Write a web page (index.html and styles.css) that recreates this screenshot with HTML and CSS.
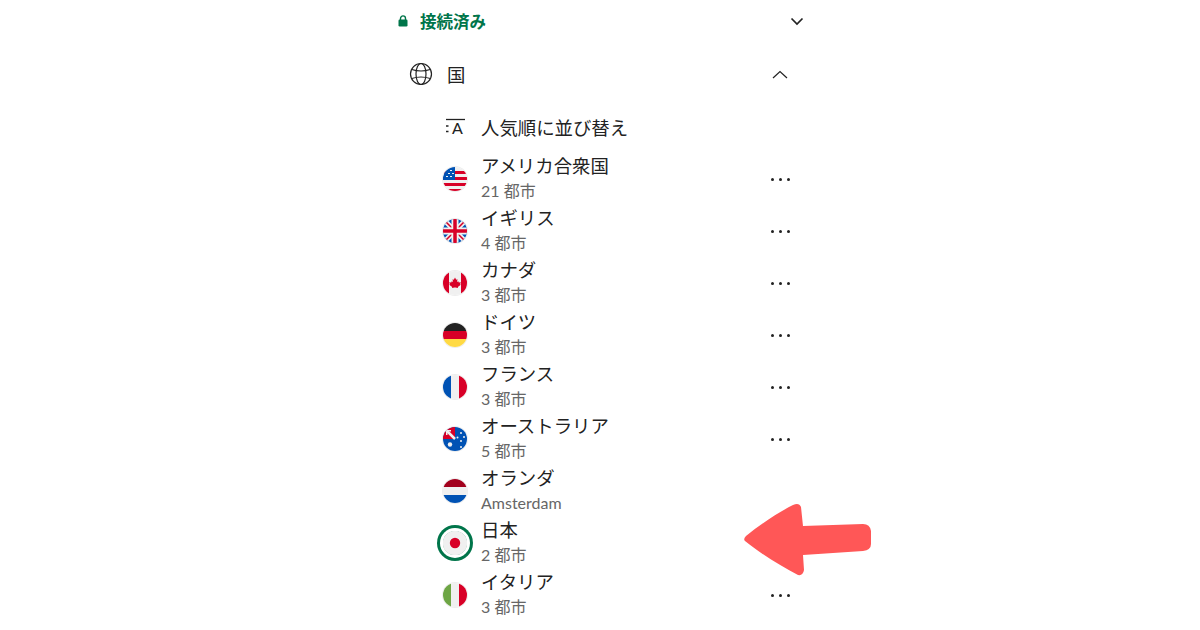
FILE: index.html
```html
<!DOCTYPE html>
<html lang="ja">
<head>
<meta charset="utf-8">
<title>接続済み</title>
<link rel="stylesheet" href="styles.css">
</head>
<body>
<svg class="defs" width="0" height="0">
  <defs>
    <clipPath id="c"><circle cx="12" cy="12" r="12"/></clipPath>
  </defs>
</svg>
<main class="panel">
  <div class="connected">
    <svg class="lock" viewBox="0 0 10 12" width="10" height="12"><path d="M2.5 5V3.4a2.5 2.5 0 0 1 5 0V5" fill="none" stroke="#00754a" stroke-width="1.4"/><rect x="0.5" y="4.6" width="9" height="6.9" rx="1.2" fill="#00754a"/></svg>
    <span class="connected-text">接続済み</span>
    <svg class="chev-down" viewBox="0 0 14 9" width="14" height="9"><path d="M1.5 1.5 7 7l5.500-5.500" fill="none" stroke="#222" stroke-width="1.700"/></svg>
  </div>
  <div class="section">
    <svg class="globe" viewBox="0 0 24 24" width="24" height="24" fill="none" stroke="#222" stroke-width="1.200"><circle cx="12" cy="12" r="10.500"/><ellipse cx="12" cy="12" rx="5" ry="10.500"/><path d="M2.800 7.500Q12 10.500 21.200 7.500M2.800 16.500Q12 13.500 21.200 16.500"/></svg>
    <span class="section-text">国</span>
    <svg class="chev-up" viewBox="0 0 16 9" width="16" height="9"><path d="M1 8 8 1.500 15 8" fill="none" stroke="#222" stroke-width="1.200"/></svg>
  </div>
  <div class="sort">
    <svg class="sort-icon" viewBox="0 0 20 18" width="20" height="18"><path d="M1 1.500h19" stroke="#222" stroke-width="1.300"/><path d="M1 8h2.500M1 13.500h2.500" stroke="#222" stroke-width="1.500"/></svg>
    <span class="sort-a">A</span>
    <span class="sort-text">人気順に並び替え</span>
  </div>
  <ul class="list">
    <li class="row">
      <span class="flag-wrap"><svg class="flag" viewBox="0 0 24 24"><g clip-path="url(#c)"><rect width="24" height="24" fill="#f0f0f0"/><path d="M0 4h24v3H0zM0 10h24v3H0zM0 16h24v3H0zM3 22h18v2H3z" fill="#d80027"/><path d="M0 0h12v13H0z" fill="#0052b4"/><path d="M3 9h2v1H3zM7 9h2v1H7zM5 6h2v1H5zM9 6h2v1H9zM7 3h2v1H7z" fill="#f0f0f0"/></g></svg></span>
      <div class="info"><div class="name">アメリカ合衆国</div><div class="sub">21 都市</div></div>
      <span class="more"><i></i><i></i><i></i></span>
    </li>
    <li class="row">
      <span class="flag-wrap"><svg class="flag" viewBox="0 0 24 24"><g clip-path="url(#c)"><rect width="24" height="24" fill="#0052b4"/><path d="M0 0 24 24M24 0 0 24" stroke="#f0f0f0" stroke-width="5"/><path d="M0 0 24 24M24 0 0 24" stroke="#d80027" stroke-width="1.500"/><path d="M12 0v24M0 12h24" stroke="#f0f0f0" stroke-width="7"/><path d="M12 0v24M0 12h24" stroke="#d80027" stroke-width="3.500"/></g></svg></span>
      <div class="info"><div class="name">イギリス</div><div class="sub">4 都市</div></div>
      <span class="more"><i></i><i></i><i></i></span>
    </li>
    <li class="row">
      <span class="flag-wrap"><svg class="flag" viewBox="0 0 24 24"><g clip-path="url(#c)"><rect width="24" height="24" fill="#f0f0f0"/><path d="M0 0h6v24H0zM18 0h6v24h-6z" fill="#d80027"/><path d="M12 6.500l1.200 2.300 1.300-.6-.5 2.800 1.300-.8.500 1.300 2-.3-.7 2 .7.500-3 2.200.3 1-2.700-.4h-.8l-2.700.4.300-1-3-2.200.7-.5-.7-2 2 .3.500-1.300 1.300.8-.5-2.800 1.300.6z" fill="#d80027"/></g></svg></span>
      <div class="info"><div class="name">カナダ</div><div class="sub">3 都市</div></div>
      <span class="more"><i></i><i></i><i></i></span>
    </li>
    <li class="row">
      <span class="flag-wrap"><svg class="flag" viewBox="0 0 24 24"><g clip-path="url(#c)"><rect width="24" height="8" fill="#222"/><rect y="8" width="24" height="8" fill="#d80027"/><rect y="16" width="24" height="8" fill="#ffda44"/></g></svg></span>
      <div class="info"><div class="name">ドイツ</div><div class="sub">3 都市</div></div>
      <span class="more"><i></i><i></i><i></i></span>
    </li>
    <li class="row">
      <span class="flag-wrap"><svg class="flag" viewBox="0 0 24 24"><g clip-path="url(#c)"><rect width="8" height="24" fill="#0052b4"/><rect x="8" width="8" height="24" fill="#f0f0f0"/><rect x="16" width="8" height="24" fill="#d80027"/></g></svg></span>
      <div class="info"><div class="name">フランス</div><div class="sub">3 都市</div></div>
      <span class="more"><i></i><i></i><i></i></span>
    </li>
    <li class="row">
      <span class="flag-wrap"><svg class="flag" viewBox="0 0 24 24"><g clip-path="url(#c)"><rect width="24" height="24" fill="#0052b4"/><path d="M0 0h12v12H0z" fill="#d80027"/><path d="M3 3 12 12" stroke="#f0f0f0" stroke-width="2.500"/><path d="M3 3h5v1.500H4.500V8H3z" fill="#f0f0f0"/><circle cx="7" cy="17.500" r="2.200" fill="#f0f0f0"/><g fill="#f0f0f0"><circle cx="18" cy="6" r="1"/><circle cx="14.500" cy="10.500" r="1"/><circle cx="21" cy="10" r="1"/><circle cx="18" cy="14" r="1"/><circle cx="18" cy="20" r="1"/></g></g></svg></span>
      <div class="info"><div class="name">オーストラリア</div><div class="sub">5 都市</div></div>
      <span class="more"><i></i><i></i><i></i></span>
    </li>
    <li class="row">
      <span class="flag-wrap"><svg class="flag" viewBox="0 0 24 24"><g clip-path="url(#c)"><rect width="24" height="8" fill="#a2001d"/><rect y="8" width="24" height="8" fill="#f0f0f0"/><rect y="16" width="24" height="8" fill="#0052b4"/></g></svg></span>
      <div class="info"><div class="name">オランダ</div><div class="sub">Amsterdam</div></div>
    </li>
    <li class="row">
      <span class="flag-wrap selected"><svg class="flag" viewBox="0 0 24 24"><g clip-path="url(#c)"><rect width="24" height="24" fill="#f0f0f0"/><circle cx="12" cy="12" r="5.200" fill="#d80027"/></g></svg></span>
      <div class="info"><div class="name">日本</div><div class="sub">2 都市</div></div>
    </li>
    <li class="row">
      <span class="flag-wrap"><svg class="flag" viewBox="0 0 24 24"><g clip-path="url(#c)"><rect width="8" height="24" fill="#6da544"/><rect x="8" width="8" height="24" fill="#f0f0f0"/><rect x="16" width="8" height="24" fill="#d80027"/></g></svg></span>
      <div class="info"><div class="name">イタリア</div><div class="sub">3 都市</div></div>
      <span class="more"><i></i><i></i><i></i></span>
    </li>
    <li class="row">
      <span class="flag-wrap"></span>
      <div class="info"><div class="name">スペイン</div></div>
    </li>
  </ul>
</main>
<svg class="arrow" viewBox="0 0 130 74" width="130" height="74"><path d="M2 38Q0 36 3 33C18 21 36 9 50 2Q56-1 58 4L60 23 120 21Q127 21 128 28V41Q128 47 120 48L60 52 61 67Q60 73 55 72C38 63 18 51 2 38Z" fill="#ff5757" transform="translate(0 0)"/></svg>
</body>
</html>
```
FILE: styles.css
```css
html, body {
  margin: 0;
  height: 630px;
  overflow: hidden;
  background: #fff;
}
body {
  position: relative;
  font-family: Lato, "Noto Sans CJK JP", sans-serif;
  color: #222;
}
.defs { display: block; height: 0; }
.panel {
  width: 420px;
  margin-left: 390px;
  display: flex;
  flex-direction: column;
}
.connected {
  display: flex;
  align-items: center;
  height: 42px;
  padding-left: 8px;
}
.lock { flex: none; }
.connected-text {
  margin-left: 12px;
  font-size: 16.500px;
  font-weight: 700;
  color: #00754a;
}
.chev-down { margin-left: auto; margin-right: 6px; }
.section {
  display: flex;
  align-items: center;
  height: 64px;
  padding-left: 19px;
}
.globe { flex: none; }
.section-text { margin-left: 14px; font-size: 18.400px; }
.chev-up { margin-left: auto; margin-right: 22px; }
.sort {
  display: flex;
  align-items: center;
  height: 42px;
  padding-left: 55px;
  position: relative;
}
.sort-icon { flex: none; }
.sort-a {
  position: absolute;
  left: 62px;
  top: 12px;
  font-size: 16px;
}
.sort-text { margin-left: 16px; font-size: 18.400px; }
.list {
  list-style: none;
  margin: 4px 0 0;
  padding: 0;
  display: flex;
  flex-direction: column;
}
.row {
  display: flex;
  align-items: center;
  height: 52px;
  padding-left: 53px;
}
.flag-wrap {
  flex: none;
  width: 24px;
  height: 24px;
  padding: 0;
  border-radius: 50%;
  box-shadow: 0 0 0 1px #eee;
  position: relative;
  top: 1px;
}
.flag { display: block; width: 24px; height: 24px; }
.selected { box-shadow: 0 0 0 3px #fff, 0 0 0 6px #00754a; }
.info { margin-left: 14px; flex: 1; }
.name { font-size: 18.400px; line-height: 26px; }
.sub { font-size: 16px; line-height: 24px; color: #666; }
.more {
  display: flex;
  gap: 5px;
  margin-right: 20px;
  position: relative;
  top: 1px;
}
.more i {
  width: 3px;
  height: 3px;
  border-radius: 50%;
  background: #222;
}
.arrow {
  position: absolute;
  left: 743px;
  top: 503px;
}
```
